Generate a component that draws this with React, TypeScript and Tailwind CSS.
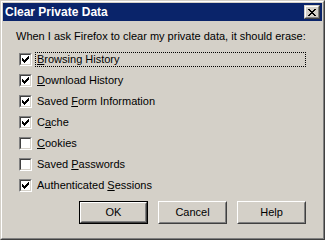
import React from 'react';

type Item = { pre: string; key: string; post: string; checked: boolean; focus?: boolean };

const items: Item[] = [
  { pre: '', key: 'B', post: 'rowsing History', checked: true, focus: true },
  { pre: '', key: 'D', post: 'ownload History', checked: true },
  { pre: 'Saved ', key: 'F', post: 'orm Information', checked: true },
  { pre: 'C', key: 'a', post: 'che', checked: true },
  { pre: '', key: 'C', post: 'ookies', checked: false },
  { pre: 'Saved ', key: 'P', post: 'asswords', checked: false },
  { pre: 'Authenticated ', key: 'S', post: 'essions', checked: true },
];

const CheckMark = () => (
  <svg width="7" height="7" viewBox="0 0 7 7" shapeRendering="crispEdges">
    <path
      d="M0 2h1v3H0zM1 3h1v3H1zM2 4h1v3H2zM3 3h1v3H3zM4 2h1v3H4zM5 1h1v3H5zM6 0h1v3H6z"
      fill="#000"
    />
  </svg>
);

const Checkbox = ({ checked }: { checked: boolean }) => (
  <div className="w-[13px] h-[13px] shrink-0 border border-t-[#808080] border-l-[#808080] border-r-white border-b-white">
    <div className="w-full h-full border border-t-[#404040] border-l-[#404040] border-r-[#d4d0c8] border-b-[#d4d0c8] bg-white flex items-center justify-center">
      {checked && <CheckMark />}
    </div>
  </div>
);

const Button = ({ label, isDefault }: { label: string; isDefault?: boolean }) => {
  const face = (
    <div className="w-full h-full border border-t-white border-l-white border-r-[#404040] border-b-[#404040]">
      <div className="w-full h-full border border-t-[#d4d0c8] border-l-[#d4d0c8] border-r-[#808080] border-b-[#808080] flex items-center justify-center">
        {label}
      </div>
    </div>
  );
  return (
    <div className={`w-[69px] h-[23px] ${isDefault ? 'border border-black' : ''}`}>{face}</div>
  );
};

export default function App() {
  return (
    <div
      className="w-[325px] h-[240px] bg-[#d4d0c8] border border-t-[#d4d0c8] border-l-[#d4d0c8] border-r-[#404040] border-b-[#404040] text-black text-[11px]"
      style={{ fontFamily: '"Liberation Sans", Arial, sans-serif' }}
    >
      <div className="h-full border border-t-white border-l-white border-r-[#808080] border-b-[#808080] p-px flex flex-col">
        <div className="h-[18px] bg-[#0a246a] flex items-center justify-between pl-[2px] pr-[2px]">
          <span className="text-white font-bold text-[12px] leading-[14px]">Clear Private Data</span>
          <div className="w-[16px] h-[14px] border border-t-[#d4d0c8] border-l-[#d4d0c8] border-r-[#404040] border-b-[#404040] bg-[#d4d0c8]">
            <div className="w-full h-full border border-t-white border-l-white border-r-[#808080] border-b-[#808080] flex items-center justify-center">
              <svg width="8" height="7" viewBox="0 0 8 7" shapeRendering="crispEdges">
                <path
                  d="M0 0h2v1H0zM6 0h2v1H6zM1 1h2v1H1zM5 1h2v1H5zM2 2h4v1H2zM3 3h2v1H3zM2 4h4v1H2zM1 5h2v1H1zM5 5h2v1H5zM0 6h2v1H0zM6 6h2v1H6z"
                  fill="#000"
                />
              </svg>
            </div>
          </div>
        </div>

        <div className="pl-[13px] mt-[9px] leading-[13px]">
          When I ask Firefox to clear my private data, it should erase:
        </div>

        <div className="mt-[6px] pl-[16px] flex flex-col">
          {items.map((it, i) => (
            <div key={i} className="h-[21px] flex items-center">
              <Checkbox checked={it.checked} />
              <div
                className={`ml-[3px] h-[15px] w-[271px] pl-px flex items-center leading-[13px] border ${
                  it.focus ? 'border-dotted border-black' : 'border-transparent'
                }`}
              >
                <span>
                  {it.pre}
                  <u className="underline-offset-[1px]">{it.key}</u>
                  {it.post}
                </span>
              </div>
            </div>
          ))}
        </div>

        <div className="mt-[5px] flex justify-end gap-[10px] pr-[16px]">
          <Button label="OK" isDefault />
          <Button label="Cancel" />
          <Button label="Help" />
        </div>
      </div>
    </div>
  );
}
